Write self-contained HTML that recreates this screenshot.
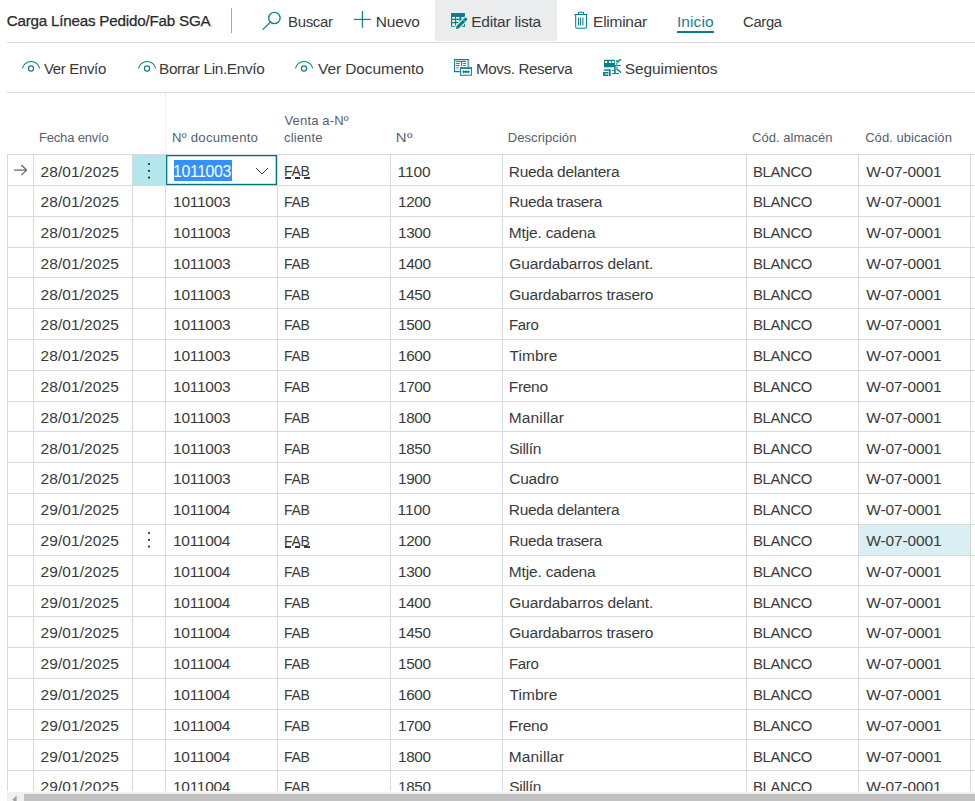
<!DOCTYPE html>
<html><head><meta charset="utf-8"><style>
html,body{margin:0;padding:0;}
body{width:975px;height:801px;overflow:hidden;position:relative;background:#fff;font-family:"Liberation Sans", sans-serif;}
.t{position:absolute;white-space:nowrap;}
.r{position:absolute;}
#clip{position:absolute;left:0;top:0;width:975px;height:791px;overflow:hidden;}
</style></head><body>
<div id="clip">
<div class="r" style="left:435px;top:0px;width:122px;height:41px;background:#ebecee;border-radius:0 0 3px 3px;"></div>
<div class="t" style="left:6.65px;top:5.00px;font-size:15.2px;line-height:31px;color:#2a2a2a;letter-spacing:-0.207px;-webkit-text-stroke:0.25px #2a2a2a;">Carga Líneas Pedido/Fab SGA</div>
<div class="r" style="left:231px;top:8px;width:1px;height:25px;background:#a3aab6;"></div>
<div class="t" style="left:288.35px;top:6.20px;font-size:15.5px;line-height:31px;color:#3a3a3a;letter-spacing:-0.350px;transform:scaleX(0.9644);transform-origin:1.25px 0;">Buscar</div>
<div class="t" style="left:375.65px;top:6.20px;font-size:15.5px;line-height:31px;color:#3a3a3a;letter-spacing:-0.119px;">Nuevo</div>
<div class="t" style="left:471.25px;top:6.20px;font-size:15.5px;line-height:31px;color:#3a3a3a;letter-spacing:-0.220px;">Editar lista</div>
<div class="t" style="left:593.05px;top:6.20px;font-size:15.5px;line-height:31px;color:#3a3a3a;letter-spacing:-0.257px;">Eliminar</div>
<div class="t" style="left:676.92px;top:6.20px;font-size:15.5px;line-height:31px;color:#17808a;letter-spacing:0.110px;">Inicio</div>
<div class="r" style="left:677px;top:31px;width:37px;height:2px;background:#0b7f86;"></div>
<div class="t" style="left:743.05px;top:6.20px;font-size:15.5px;line-height:31px;color:#3a3a3a;letter-spacing:-0.350px;transform:scaleX(0.9551);transform-origin:0.75px 0;">Carga</div>
<div class="r" style="left:7px;top:42px;width:968px;height:1px;background:#d6d9de;"></div>
<div class="t" style="left:44.40px;top:53.30px;font-size:15.5px;line-height:31px;color:#3a3a3a;letter-spacing:-0.350px;transform:scaleX(0.9667);transform-origin:0.00px 0;">Ver Envío</div>
<div class="t" style="left:159.15px;top:53.30px;font-size:15.5px;line-height:31px;color:#3a3a3a;letter-spacing:-0.350px;transform:scaleX(0.9897);transform-origin:1.25px 0;">Borrar Lin.Envío</div>
<div class="t" style="left:318.00px;top:53.30px;font-size:15.5px;line-height:31px;color:#3a3a3a;letter-spacing:-0.087px;">Ver Documento</div>
<div class="t" style="left:475.75px;top:53.30px;font-size:15.5px;line-height:31px;color:#3a3a3a;letter-spacing:-0.350px;transform:scaleX(0.9742);transform-origin:1.25px 0;">Movs. Reserva</div>
<div class="t" style="left:624.85px;top:53.30px;font-size:15.5px;line-height:31px;color:#3a3a3a;letter-spacing:-0.111px;">Seguimientos</div>
<div class="r" style="left:7px;top:92px;width:968px;height:1px;background:#d6d9de;"></div>
<div class="r" style="left:165px;top:93px;width:1px;height:61px;background:#eeeff1;"></div>
<div class="t" style="left:39.00px;top:125.10px;font-size:13px;line-height:26px;color:#56606e;letter-spacing:-0.183px;">Fecha envío</div>
<div class="t" style="left:171.50px;top:125.10px;font-size:13px;line-height:26px;color:#56606e;letter-spacing:0.250px;transform:scaleX(1.0135);transform-origin:1.00px 0;">Nº documento</div>
<div class="t" style="left:284.50px;top:108.40px;font-size:13px;line-height:26px;color:#56606e;letter-spacing:0.167px;">Venta a-Nº</div>
<div class="t" style="left:284.00px;top:125.10px;font-size:13px;line-height:26px;color:#56606e;letter-spacing:0.133px;">cliente</div>
<div class="t" style="left:395.50px;top:125.10px;font-size:13px;line-height:26px;color:#56606e;letter-spacing:0.250px;transform:scaleX(1.1472);transform-origin:1.00px 0;">Nº</div>
<div class="t" style="left:507.80px;top:125.10px;font-size:13px;line-height:26px;color:#56606e;letter-spacing:0.067px;">Descripción</div>
<div class="t" style="left:752.08px;top:125.10px;font-size:13px;line-height:26px;color:#56606e;letter-spacing:0.023px;">Cód. almacén</div>
<div class="t" style="left:865.17px;top:125.10px;font-size:13px;line-height:26px;color:#56606e;letter-spacing:0.054px;">Cód. ubicación</div>
<div class="r" style="left:133px;top:155px;width:32px;height:30px;background:#b3e7eb;"></div>
<div class="r" style="left:859px;top:525px;width:111px;height:30px;background:#d9eff2;"></div>
<div class="r" style="left:7px;top:154px;width:968px;height:1px;background:#d6d9de;"></div>
<div class="r" style="left:7px;top:185px;width:968px;height:1px;background:#d6d9de;"></div>
<div class="r" style="left:7px;top:216px;width:968px;height:1px;background:#d6d9de;"></div>
<div class="r" style="left:7px;top:247px;width:968px;height:1px;background:#d6d9de;"></div>
<div class="r" style="left:7px;top:277px;width:968px;height:1px;background:#d6d9de;"></div>
<div class="r" style="left:7px;top:308px;width:968px;height:1px;background:#d6d9de;"></div>
<div class="r" style="left:7px;top:339px;width:968px;height:1px;background:#d6d9de;"></div>
<div class="r" style="left:7px;top:370px;width:968px;height:1px;background:#d6d9de;"></div>
<div class="r" style="left:7px;top:401px;width:968px;height:1px;background:#d6d9de;"></div>
<div class="r" style="left:7px;top:431px;width:968px;height:1px;background:#d6d9de;"></div>
<div class="r" style="left:7px;top:462px;width:968px;height:1px;background:#d6d9de;"></div>
<div class="r" style="left:7px;top:493px;width:968px;height:1px;background:#d6d9de;"></div>
<div class="r" style="left:7px;top:524px;width:968px;height:1px;background:#d6d9de;"></div>
<div class="r" style="left:7px;top:555px;width:968px;height:1px;background:#d6d9de;"></div>
<div class="r" style="left:7px;top:585px;width:968px;height:1px;background:#d6d9de;"></div>
<div class="r" style="left:7px;top:616px;width:968px;height:1px;background:#d6d9de;"></div>
<div class="r" style="left:7px;top:647px;width:968px;height:1px;background:#d6d9de;"></div>
<div class="r" style="left:7px;top:678px;width:968px;height:1px;background:#d6d9de;"></div>
<div class="r" style="left:7px;top:709px;width:968px;height:1px;background:#d6d9de;"></div>
<div class="r" style="left:7px;top:739px;width:968px;height:1px;background:#d6d9de;"></div>
<div class="r" style="left:7px;top:770px;width:968px;height:1px;background:#d6d9de;"></div>
<div class="r" style="left:7px;top:801px;width:968px;height:1px;background:#d6d9de;"></div>
<div class="r" style="left:7px;top:154px;width:1px;height:637px;background:#d6d9de;"></div>
<div class="r" style="left:33px;top:154px;width:1px;height:637px;background:#d6d9de;"></div>
<div class="r" style="left:132px;top:154px;width:1px;height:637px;background:#d6d9de;"></div>
<div class="r" style="left:165px;top:154px;width:1px;height:637px;background:#d6d9de;"></div>
<div class="r" style="left:277px;top:154px;width:1px;height:637px;background:#d6d9de;"></div>
<div class="r" style="left:390px;top:154px;width:1px;height:637px;background:#d6d9de;"></div>
<div class="r" style="left:502px;top:154px;width:1px;height:637px;background:#d6d9de;"></div>
<div class="r" style="left:746px;top:154px;width:1px;height:637px;background:#d6d9de;"></div>
<div class="r" style="left:858px;top:154px;width:1px;height:637px;background:#d6d9de;"></div>
<div class="r" style="left:970px;top:154px;width:1px;height:637px;background:#d6d9de;"></div>
<div class="t" style="left:40.55px;top:156.00px;font-size:15.5px;line-height:31px;color:#3a3a3a;letter-spacing:0.072px;">28/01/2025</div>
<div class="t" style="left:284.45px;top:154.70px;font-size:15.5px;line-height:31px;color:#3a3a3a;letter-spacing:-0.350px;transform:scaleX(0.9002);transform-origin:1.25px 0;">FAB</div>
<div class="t" style="left:397.57px;top:156.00px;font-size:15.5px;line-height:31px;color:#3a3a3a;letter-spacing:-0.108px;">1100</div>
<div class="t" style="left:508.75px;top:156.00px;font-size:15.5px;line-height:31px;color:#3a3a3a;letter-spacing:-0.270px;">Rueda delantera</div>
<div class="t" style="left:753.35px;top:156.00px;font-size:15.5px;line-height:31px;color:#3a3a3a;letter-spacing:-0.350px;transform:scaleX(0.9567);transform-origin:1.25px 0;">BLANCO</div>
<div class="t" style="left:866.20px;top:156.00px;font-size:15.5px;line-height:31px;color:#3a3a3a;letter-spacing:-0.116px;">W-07-0001</div>
<div class="t" style="left:40.55px;top:186.20px;font-size:15.5px;line-height:31px;color:#3a3a3a;letter-spacing:0.072px;">28/01/2025</div>
<div class="t" style="left:173.07px;top:186.20px;font-size:15.5px;line-height:31px;color:#3a3a3a;letter-spacing:-0.267px;">1011003</div>
<div class="t" style="left:284.45px;top:186.20px;font-size:15.5px;line-height:31px;color:#3a3a3a;letter-spacing:-0.350px;transform:scaleX(0.9002);transform-origin:1.25px 0;">FAB</div>
<div class="t" style="left:397.57px;top:186.20px;font-size:15.5px;line-height:31px;color:#3a3a3a;letter-spacing:-0.350px;transform:scaleX(0.9874);transform-origin:1.12px 0;">1200</div>
<div class="t" style="left:508.75px;top:186.20px;font-size:15.5px;line-height:31px;color:#3a3a3a;letter-spacing:-0.350px;transform:scaleX(0.9925);transform-origin:1.25px 0;">Rueda trasera</div>
<div class="t" style="left:753.35px;top:186.20px;font-size:15.5px;line-height:31px;color:#3a3a3a;letter-spacing:-0.350px;transform:scaleX(0.9567);transform-origin:1.25px 0;">BLANCO</div>
<div class="t" style="left:866.20px;top:186.20px;font-size:15.5px;line-height:31px;color:#3a3a3a;letter-spacing:-0.116px;">W-07-0001</div>
<div class="t" style="left:40.55px;top:217.00px;font-size:15.5px;line-height:31px;color:#3a3a3a;letter-spacing:0.072px;">28/01/2025</div>
<div class="t" style="left:173.07px;top:217.00px;font-size:15.5px;line-height:31px;color:#3a3a3a;letter-spacing:-0.267px;">1011003</div>
<div class="t" style="left:284.45px;top:217.00px;font-size:15.5px;line-height:31px;color:#3a3a3a;letter-spacing:-0.350px;transform:scaleX(0.9002);transform-origin:1.25px 0;">FAB</div>
<div class="t" style="left:397.57px;top:217.00px;font-size:15.5px;line-height:31px;color:#3a3a3a;letter-spacing:-0.350px;transform:scaleX(0.9874);transform-origin:1.12px 0;">1300</div>
<div class="t" style="left:508.75px;top:217.00px;font-size:15.5px;line-height:31px;color:#3a3a3a;letter-spacing:-0.164px;">Mtje. cadena</div>
<div class="t" style="left:753.35px;top:217.00px;font-size:15.5px;line-height:31px;color:#3a3a3a;letter-spacing:-0.350px;transform:scaleX(0.9567);transform-origin:1.25px 0;">BLANCO</div>
<div class="t" style="left:866.20px;top:217.00px;font-size:15.5px;line-height:31px;color:#3a3a3a;letter-spacing:-0.116px;">W-07-0001</div>
<div class="t" style="left:40.55px;top:247.80px;font-size:15.5px;line-height:31px;color:#3a3a3a;letter-spacing:0.072px;">28/01/2025</div>
<div class="t" style="left:173.07px;top:247.80px;font-size:15.5px;line-height:31px;color:#3a3a3a;letter-spacing:-0.267px;">1011003</div>
<div class="t" style="left:284.45px;top:247.80px;font-size:15.5px;line-height:31px;color:#3a3a3a;letter-spacing:-0.350px;transform:scaleX(0.9002);transform-origin:1.25px 0;">FAB</div>
<div class="t" style="left:397.57px;top:247.80px;font-size:15.5px;line-height:31px;color:#3a3a3a;letter-spacing:-0.350px;transform:scaleX(0.9874);transform-origin:1.12px 0;">1400</div>
<div class="t" style="left:509.25px;top:247.80px;font-size:15.5px;line-height:31px;color:#3a3a3a;letter-spacing:-0.129px;">Guardabarros delant.</div>
<div class="t" style="left:753.35px;top:247.80px;font-size:15.5px;line-height:31px;color:#3a3a3a;letter-spacing:-0.350px;transform:scaleX(0.9567);transform-origin:1.25px 0;">BLANCO</div>
<div class="t" style="left:866.20px;top:247.80px;font-size:15.5px;line-height:31px;color:#3a3a3a;letter-spacing:-0.116px;">W-07-0001</div>
<div class="t" style="left:40.55px;top:278.60px;font-size:15.5px;line-height:31px;color:#3a3a3a;letter-spacing:0.072px;">28/01/2025</div>
<div class="t" style="left:173.07px;top:278.60px;font-size:15.5px;line-height:31px;color:#3a3a3a;letter-spacing:-0.267px;">1011003</div>
<div class="t" style="left:284.45px;top:278.60px;font-size:15.5px;line-height:31px;color:#3a3a3a;letter-spacing:-0.350px;transform:scaleX(0.9002);transform-origin:1.25px 0;">FAB</div>
<div class="t" style="left:397.57px;top:278.60px;font-size:15.5px;line-height:31px;color:#3a3a3a;letter-spacing:-0.350px;transform:scaleX(0.9874);transform-origin:1.12px 0;">1450</div>
<div class="t" style="left:509.25px;top:278.60px;font-size:15.5px;line-height:31px;color:#3a3a3a;letter-spacing:-0.214px;">Guardabarros trasero</div>
<div class="t" style="left:753.35px;top:278.60px;font-size:15.5px;line-height:31px;color:#3a3a3a;letter-spacing:-0.350px;transform:scaleX(0.9567);transform-origin:1.25px 0;">BLANCO</div>
<div class="t" style="left:866.20px;top:278.60px;font-size:15.5px;line-height:31px;color:#3a3a3a;letter-spacing:-0.116px;">W-07-0001</div>
<div class="t" style="left:40.55px;top:309.40px;font-size:15.5px;line-height:31px;color:#3a3a3a;letter-spacing:0.072px;">28/01/2025</div>
<div class="t" style="left:173.07px;top:309.40px;font-size:15.5px;line-height:31px;color:#3a3a3a;letter-spacing:-0.267px;">1011003</div>
<div class="t" style="left:284.45px;top:309.40px;font-size:15.5px;line-height:31px;color:#3a3a3a;letter-spacing:-0.350px;transform:scaleX(0.9002);transform-origin:1.25px 0;">FAB</div>
<div class="t" style="left:397.57px;top:309.40px;font-size:15.5px;line-height:31px;color:#3a3a3a;letter-spacing:-0.350px;transform:scaleX(0.9874);transform-origin:1.12px 0;">1500</div>
<div class="t" style="left:508.75px;top:309.40px;font-size:15.5px;line-height:31px;color:#3a3a3a;letter-spacing:-0.350px;transform:scaleX(0.9672);transform-origin:1.25px 0;">Faro</div>
<div class="t" style="left:753.35px;top:309.40px;font-size:15.5px;line-height:31px;color:#3a3a3a;letter-spacing:-0.350px;transform:scaleX(0.9567);transform-origin:1.25px 0;">BLANCO</div>
<div class="t" style="left:866.20px;top:309.40px;font-size:15.5px;line-height:31px;color:#3a3a3a;letter-spacing:-0.116px;">W-07-0001</div>
<div class="t" style="left:40.55px;top:340.20px;font-size:15.5px;line-height:31px;color:#3a3a3a;letter-spacing:0.072px;">28/01/2025</div>
<div class="t" style="left:173.07px;top:340.20px;font-size:15.5px;line-height:31px;color:#3a3a3a;letter-spacing:-0.267px;">1011003</div>
<div class="t" style="left:284.45px;top:340.20px;font-size:15.5px;line-height:31px;color:#3a3a3a;letter-spacing:-0.350px;transform:scaleX(0.9002);transform-origin:1.25px 0;">FAB</div>
<div class="t" style="left:397.57px;top:340.20px;font-size:15.5px;line-height:31px;color:#3a3a3a;letter-spacing:-0.350px;transform:scaleX(0.9874);transform-origin:1.12px 0;">1600</div>
<div class="t" style="left:509.62px;top:340.20px;font-size:15.5px;line-height:31px;color:#3a3a3a;letter-spacing:0.015px;">Timbre</div>
<div class="t" style="left:753.35px;top:340.20px;font-size:15.5px;line-height:31px;color:#3a3a3a;letter-spacing:-0.350px;transform:scaleX(0.9567);transform-origin:1.25px 0;">BLANCO</div>
<div class="t" style="left:866.20px;top:340.20px;font-size:15.5px;line-height:31px;color:#3a3a3a;letter-spacing:-0.116px;">W-07-0001</div>
<div class="t" style="left:40.55px;top:371.00px;font-size:15.5px;line-height:31px;color:#3a3a3a;letter-spacing:0.072px;">28/01/2025</div>
<div class="t" style="left:173.07px;top:371.00px;font-size:15.5px;line-height:31px;color:#3a3a3a;letter-spacing:-0.267px;">1011003</div>
<div class="t" style="left:284.45px;top:371.00px;font-size:15.5px;line-height:31px;color:#3a3a3a;letter-spacing:-0.350px;transform:scaleX(0.9002);transform-origin:1.25px 0;">FAB</div>
<div class="t" style="left:397.57px;top:371.00px;font-size:15.5px;line-height:31px;color:#3a3a3a;letter-spacing:-0.350px;transform:scaleX(0.9874);transform-origin:1.12px 0;">1700</div>
<div class="t" style="left:508.75px;top:371.00px;font-size:15.5px;line-height:31px;color:#3a3a3a;letter-spacing:-0.306px;">Freno</div>
<div class="t" style="left:753.35px;top:371.00px;font-size:15.5px;line-height:31px;color:#3a3a3a;letter-spacing:-0.350px;transform:scaleX(0.9567);transform-origin:1.25px 0;">BLANCO</div>
<div class="t" style="left:866.20px;top:371.00px;font-size:15.5px;line-height:31px;color:#3a3a3a;letter-spacing:-0.116px;">W-07-0001</div>
<div class="t" style="left:40.55px;top:401.80px;font-size:15.5px;line-height:31px;color:#3a3a3a;letter-spacing:0.072px;">28/01/2025</div>
<div class="t" style="left:173.07px;top:401.80px;font-size:15.5px;line-height:31px;color:#3a3a3a;letter-spacing:-0.267px;">1011003</div>
<div class="t" style="left:284.45px;top:401.80px;font-size:15.5px;line-height:31px;color:#3a3a3a;letter-spacing:-0.350px;transform:scaleX(0.9002);transform-origin:1.25px 0;">FAB</div>
<div class="t" style="left:397.57px;top:401.80px;font-size:15.5px;line-height:31px;color:#3a3a3a;letter-spacing:-0.350px;transform:scaleX(0.9874);transform-origin:1.12px 0;">1800</div>
<div class="t" style="left:508.75px;top:401.80px;font-size:15.5px;line-height:31px;color:#3a3a3a;letter-spacing:0.136px;">Manillar</div>
<div class="t" style="left:753.35px;top:401.80px;font-size:15.5px;line-height:31px;color:#3a3a3a;letter-spacing:-0.350px;transform:scaleX(0.9567);transform-origin:1.25px 0;">BLANCO</div>
<div class="t" style="left:866.20px;top:401.80px;font-size:15.5px;line-height:31px;color:#3a3a3a;letter-spacing:-0.116px;">W-07-0001</div>
<div class="t" style="left:40.55px;top:432.60px;font-size:15.5px;line-height:31px;color:#3a3a3a;letter-spacing:0.072px;">28/01/2025</div>
<div class="t" style="left:173.07px;top:432.60px;font-size:15.5px;line-height:31px;color:#3a3a3a;letter-spacing:-0.267px;">1011003</div>
<div class="t" style="left:284.45px;top:432.60px;font-size:15.5px;line-height:31px;color:#3a3a3a;letter-spacing:-0.350px;transform:scaleX(0.9002);transform-origin:1.25px 0;">FAB</div>
<div class="t" style="left:397.57px;top:432.60px;font-size:15.5px;line-height:31px;color:#3a3a3a;letter-spacing:-0.350px;transform:scaleX(0.9874);transform-origin:1.12px 0;">1850</div>
<div class="t" style="left:509.25px;top:432.60px;font-size:15.5px;line-height:31px;color:#3a3a3a;letter-spacing:-0.295px;">Sillín</div>
<div class="t" style="left:753.35px;top:432.60px;font-size:15.5px;line-height:31px;color:#3a3a3a;letter-spacing:-0.350px;transform:scaleX(0.9567);transform-origin:1.25px 0;">BLANCO</div>
<div class="t" style="left:866.20px;top:432.60px;font-size:15.5px;line-height:31px;color:#3a3a3a;letter-spacing:-0.116px;">W-07-0001</div>
<div class="t" style="left:40.55px;top:463.40px;font-size:15.5px;line-height:31px;color:#3a3a3a;letter-spacing:0.072px;">28/01/2025</div>
<div class="t" style="left:173.07px;top:463.40px;font-size:15.5px;line-height:31px;color:#3a3a3a;letter-spacing:-0.267px;">1011003</div>
<div class="t" style="left:284.45px;top:463.40px;font-size:15.5px;line-height:31px;color:#3a3a3a;letter-spacing:-0.350px;transform:scaleX(0.9002);transform-origin:1.25px 0;">FAB</div>
<div class="t" style="left:397.57px;top:463.40px;font-size:15.5px;line-height:31px;color:#3a3a3a;letter-spacing:-0.350px;transform:scaleX(0.9874);transform-origin:1.12px 0;">1900</div>
<div class="t" style="left:509.25px;top:463.40px;font-size:15.5px;line-height:31px;color:#3a3a3a;letter-spacing:-0.220px;">Cuadro</div>
<div class="t" style="left:753.35px;top:463.40px;font-size:15.5px;line-height:31px;color:#3a3a3a;letter-spacing:-0.350px;transform:scaleX(0.9567);transform-origin:1.25px 0;">BLANCO</div>
<div class="t" style="left:866.20px;top:463.40px;font-size:15.5px;line-height:31px;color:#3a3a3a;letter-spacing:-0.116px;">W-07-0001</div>
<div class="t" style="left:40.55px;top:494.20px;font-size:15.5px;line-height:31px;color:#3a3a3a;letter-spacing:0.072px;">29/01/2025</div>
<div class="t" style="left:173.07px;top:494.20px;font-size:15.5px;line-height:31px;color:#3a3a3a;letter-spacing:-0.308px;">1011004</div>
<div class="t" style="left:284.45px;top:494.20px;font-size:15.5px;line-height:31px;color:#3a3a3a;letter-spacing:-0.350px;transform:scaleX(0.9002);transform-origin:1.25px 0;">FAB</div>
<div class="t" style="left:397.57px;top:494.20px;font-size:15.5px;line-height:31px;color:#3a3a3a;letter-spacing:-0.108px;">1100</div>
<div class="t" style="left:508.75px;top:494.20px;font-size:15.5px;line-height:31px;color:#3a3a3a;letter-spacing:-0.270px;">Rueda delantera</div>
<div class="t" style="left:753.35px;top:494.20px;font-size:15.5px;line-height:31px;color:#3a3a3a;letter-spacing:-0.350px;transform:scaleX(0.9567);transform-origin:1.25px 0;">BLANCO</div>
<div class="t" style="left:866.20px;top:494.20px;font-size:15.5px;line-height:31px;color:#3a3a3a;letter-spacing:-0.116px;">W-07-0001</div>
<div class="t" style="left:40.55px;top:525.00px;font-size:15.5px;line-height:31px;color:#3a3a3a;letter-spacing:0.072px;">29/01/2025</div>
<div class="t" style="left:173.07px;top:525.00px;font-size:15.5px;line-height:31px;color:#3a3a3a;letter-spacing:-0.308px;">1011004</div>
<div class="t" style="left:284.45px;top:524.60px;font-size:15.5px;line-height:31px;color:#3a3a3a;letter-spacing:-0.350px;transform:scaleX(0.9002);transform-origin:1.25px 0;">FAB</div>
<div class="t" style="left:397.57px;top:525.00px;font-size:15.5px;line-height:31px;color:#3a3a3a;letter-spacing:-0.350px;transform:scaleX(0.9874);transform-origin:1.12px 0;">1200</div>
<div class="t" style="left:508.75px;top:525.00px;font-size:15.5px;line-height:31px;color:#3a3a3a;letter-spacing:-0.350px;transform:scaleX(0.9925);transform-origin:1.25px 0;">Rueda trasera</div>
<div class="t" style="left:753.35px;top:525.00px;font-size:15.5px;line-height:31px;color:#3a3a3a;letter-spacing:-0.350px;transform:scaleX(0.9567);transform-origin:1.25px 0;">BLANCO</div>
<div class="t" style="left:866.20px;top:525.00px;font-size:15.5px;line-height:31px;color:#3a3a3a;letter-spacing:-0.116px;">W-07-0001</div>
<div class="t" style="left:40.55px;top:555.80px;font-size:15.5px;line-height:31px;color:#3a3a3a;letter-spacing:0.072px;">29/01/2025</div>
<div class="t" style="left:173.07px;top:555.80px;font-size:15.5px;line-height:31px;color:#3a3a3a;letter-spacing:-0.308px;">1011004</div>
<div class="t" style="left:284.45px;top:555.80px;font-size:15.5px;line-height:31px;color:#3a3a3a;letter-spacing:-0.350px;transform:scaleX(0.9002);transform-origin:1.25px 0;">FAB</div>
<div class="t" style="left:397.57px;top:555.80px;font-size:15.5px;line-height:31px;color:#3a3a3a;letter-spacing:-0.350px;transform:scaleX(0.9874);transform-origin:1.12px 0;">1300</div>
<div class="t" style="left:508.75px;top:555.80px;font-size:15.5px;line-height:31px;color:#3a3a3a;letter-spacing:-0.164px;">Mtje. cadena</div>
<div class="t" style="left:753.35px;top:555.80px;font-size:15.5px;line-height:31px;color:#3a3a3a;letter-spacing:-0.350px;transform:scaleX(0.9567);transform-origin:1.25px 0;">BLANCO</div>
<div class="t" style="left:866.20px;top:555.80px;font-size:15.5px;line-height:31px;color:#3a3a3a;letter-spacing:-0.116px;">W-07-0001</div>
<div class="t" style="left:40.55px;top:586.60px;font-size:15.5px;line-height:31px;color:#3a3a3a;letter-spacing:0.072px;">29/01/2025</div>
<div class="t" style="left:173.07px;top:586.60px;font-size:15.5px;line-height:31px;color:#3a3a3a;letter-spacing:-0.308px;">1011004</div>
<div class="t" style="left:284.45px;top:586.60px;font-size:15.5px;line-height:31px;color:#3a3a3a;letter-spacing:-0.350px;transform:scaleX(0.9002);transform-origin:1.25px 0;">FAB</div>
<div class="t" style="left:397.57px;top:586.60px;font-size:15.5px;line-height:31px;color:#3a3a3a;letter-spacing:-0.350px;transform:scaleX(0.9874);transform-origin:1.12px 0;">1400</div>
<div class="t" style="left:509.25px;top:586.60px;font-size:15.5px;line-height:31px;color:#3a3a3a;letter-spacing:-0.129px;">Guardabarros delant.</div>
<div class="t" style="left:753.35px;top:586.60px;font-size:15.5px;line-height:31px;color:#3a3a3a;letter-spacing:-0.350px;transform:scaleX(0.9567);transform-origin:1.25px 0;">BLANCO</div>
<div class="t" style="left:866.20px;top:586.60px;font-size:15.5px;line-height:31px;color:#3a3a3a;letter-spacing:-0.116px;">W-07-0001</div>
<div class="t" style="left:40.55px;top:617.40px;font-size:15.5px;line-height:31px;color:#3a3a3a;letter-spacing:0.072px;">29/01/2025</div>
<div class="t" style="left:173.07px;top:617.40px;font-size:15.5px;line-height:31px;color:#3a3a3a;letter-spacing:-0.308px;">1011004</div>
<div class="t" style="left:284.45px;top:617.40px;font-size:15.5px;line-height:31px;color:#3a3a3a;letter-spacing:-0.350px;transform:scaleX(0.9002);transform-origin:1.25px 0;">FAB</div>
<div class="t" style="left:397.57px;top:617.40px;font-size:15.5px;line-height:31px;color:#3a3a3a;letter-spacing:-0.350px;transform:scaleX(0.9874);transform-origin:1.12px 0;">1450</div>
<div class="t" style="left:509.25px;top:617.40px;font-size:15.5px;line-height:31px;color:#3a3a3a;letter-spacing:-0.214px;">Guardabarros trasero</div>
<div class="t" style="left:753.35px;top:617.40px;font-size:15.5px;line-height:31px;color:#3a3a3a;letter-spacing:-0.350px;transform:scaleX(0.9567);transform-origin:1.25px 0;">BLANCO</div>
<div class="t" style="left:866.20px;top:617.40px;font-size:15.5px;line-height:31px;color:#3a3a3a;letter-spacing:-0.116px;">W-07-0001</div>
<div class="t" style="left:40.55px;top:648.20px;font-size:15.5px;line-height:31px;color:#3a3a3a;letter-spacing:0.072px;">29/01/2025</div>
<div class="t" style="left:173.07px;top:648.20px;font-size:15.5px;line-height:31px;color:#3a3a3a;letter-spacing:-0.308px;">1011004</div>
<div class="t" style="left:284.45px;top:648.20px;font-size:15.5px;line-height:31px;color:#3a3a3a;letter-spacing:-0.350px;transform:scaleX(0.9002);transform-origin:1.25px 0;">FAB</div>
<div class="t" style="left:397.57px;top:648.20px;font-size:15.5px;line-height:31px;color:#3a3a3a;letter-spacing:-0.350px;transform:scaleX(0.9874);transform-origin:1.12px 0;">1500</div>
<div class="t" style="left:508.75px;top:648.20px;font-size:15.5px;line-height:31px;color:#3a3a3a;letter-spacing:-0.350px;transform:scaleX(0.9672);transform-origin:1.25px 0;">Faro</div>
<div class="t" style="left:753.35px;top:648.20px;font-size:15.5px;line-height:31px;color:#3a3a3a;letter-spacing:-0.350px;transform:scaleX(0.9567);transform-origin:1.25px 0;">BLANCO</div>
<div class="t" style="left:866.20px;top:648.20px;font-size:15.5px;line-height:31px;color:#3a3a3a;letter-spacing:-0.116px;">W-07-0001</div>
<div class="t" style="left:40.55px;top:679.00px;font-size:15.5px;line-height:31px;color:#3a3a3a;letter-spacing:0.072px;">29/01/2025</div>
<div class="t" style="left:173.07px;top:679.00px;font-size:15.5px;line-height:31px;color:#3a3a3a;letter-spacing:-0.308px;">1011004</div>
<div class="t" style="left:284.45px;top:679.00px;font-size:15.5px;line-height:31px;color:#3a3a3a;letter-spacing:-0.350px;transform:scaleX(0.9002);transform-origin:1.25px 0;">FAB</div>
<div class="t" style="left:397.57px;top:679.00px;font-size:15.5px;line-height:31px;color:#3a3a3a;letter-spacing:-0.350px;transform:scaleX(0.9874);transform-origin:1.12px 0;">1600</div>
<div class="t" style="left:509.62px;top:679.00px;font-size:15.5px;line-height:31px;color:#3a3a3a;letter-spacing:0.015px;">Timbre</div>
<div class="t" style="left:753.35px;top:679.00px;font-size:15.5px;line-height:31px;color:#3a3a3a;letter-spacing:-0.350px;transform:scaleX(0.9567);transform-origin:1.25px 0;">BLANCO</div>
<div class="t" style="left:866.20px;top:679.00px;font-size:15.5px;line-height:31px;color:#3a3a3a;letter-spacing:-0.116px;">W-07-0001</div>
<div class="t" style="left:40.55px;top:709.80px;font-size:15.5px;line-height:31px;color:#3a3a3a;letter-spacing:0.072px;">29/01/2025</div>
<div class="t" style="left:173.07px;top:709.80px;font-size:15.5px;line-height:31px;color:#3a3a3a;letter-spacing:-0.308px;">1011004</div>
<div class="t" style="left:284.45px;top:709.80px;font-size:15.5px;line-height:31px;color:#3a3a3a;letter-spacing:-0.350px;transform:scaleX(0.9002);transform-origin:1.25px 0;">FAB</div>
<div class="t" style="left:397.57px;top:709.80px;font-size:15.5px;line-height:31px;color:#3a3a3a;letter-spacing:-0.350px;transform:scaleX(0.9874);transform-origin:1.12px 0;">1700</div>
<div class="t" style="left:508.75px;top:709.80px;font-size:15.5px;line-height:31px;color:#3a3a3a;letter-spacing:-0.306px;">Freno</div>
<div class="t" style="left:753.35px;top:709.80px;font-size:15.5px;line-height:31px;color:#3a3a3a;letter-spacing:-0.350px;transform:scaleX(0.9567);transform-origin:1.25px 0;">BLANCO</div>
<div class="t" style="left:866.20px;top:709.80px;font-size:15.5px;line-height:31px;color:#3a3a3a;letter-spacing:-0.116px;">W-07-0001</div>
<div class="t" style="left:40.55px;top:740.60px;font-size:15.5px;line-height:31px;color:#3a3a3a;letter-spacing:0.072px;">29/01/2025</div>
<div class="t" style="left:173.07px;top:740.60px;font-size:15.5px;line-height:31px;color:#3a3a3a;letter-spacing:-0.308px;">1011004</div>
<div class="t" style="left:284.45px;top:740.60px;font-size:15.5px;line-height:31px;color:#3a3a3a;letter-spacing:-0.350px;transform:scaleX(0.9002);transform-origin:1.25px 0;">FAB</div>
<div class="t" style="left:397.57px;top:740.60px;font-size:15.5px;line-height:31px;color:#3a3a3a;letter-spacing:-0.350px;transform:scaleX(0.9874);transform-origin:1.12px 0;">1800</div>
<div class="t" style="left:508.75px;top:740.60px;font-size:15.5px;line-height:31px;color:#3a3a3a;letter-spacing:0.136px;">Manillar</div>
<div class="t" style="left:753.35px;top:740.60px;font-size:15.5px;line-height:31px;color:#3a3a3a;letter-spacing:-0.350px;transform:scaleX(0.9567);transform-origin:1.25px 0;">BLANCO</div>
<div class="t" style="left:866.20px;top:740.60px;font-size:15.5px;line-height:31px;color:#3a3a3a;letter-spacing:-0.116px;">W-07-0001</div>
<div class="t" style="left:40.55px;top:771.40px;font-size:15.5px;line-height:31px;color:#3a3a3a;letter-spacing:0.072px;">29/01/2025</div>
<div class="t" style="left:173.07px;top:771.40px;font-size:15.5px;line-height:31px;color:#3a3a3a;letter-spacing:-0.308px;">1011004</div>
<div class="t" style="left:284.45px;top:771.40px;font-size:15.5px;line-height:31px;color:#3a3a3a;letter-spacing:-0.350px;transform:scaleX(0.9002);transform-origin:1.25px 0;">FAB</div>
<div class="t" style="left:397.57px;top:771.40px;font-size:15.5px;line-height:31px;color:#3a3a3a;letter-spacing:-0.350px;transform:scaleX(0.9874);transform-origin:1.12px 0;">1850</div>
<div class="t" style="left:509.25px;top:771.40px;font-size:15.5px;line-height:31px;color:#3a3a3a;letter-spacing:-0.295px;">Sillín</div>
<div class="t" style="left:753.35px;top:771.40px;font-size:15.5px;line-height:31px;color:#3a3a3a;letter-spacing:-0.350px;transform:scaleX(0.9567);transform-origin:1.25px 0;">BLANCO</div>
<div class="t" style="left:866.20px;top:771.40px;font-size:15.5px;line-height:31px;color:#3a3a3a;letter-spacing:-0.116px;">W-07-0001</div>
<svg style="position:absolute;left:255px;top:5px;overflow:visible" width="30" height="30" viewBox="255 5 30 30"><circle cx="274.4" cy="18" r="5.7" fill="none" stroke="#0a7f86" stroke-width="1.3"/><line x1="270.3" y1="22.1" x2="263" y2="29.4" stroke="#0a7f86" stroke-width="1.3" stroke-linecap="round"/></svg>
<svg style="position:absolute;left:350px;top:8px;overflow:visible" width="25" height="25" viewBox="350 8 25 25"><line x1="353.8" y1="19.4" x2="370.9" y2="19.4" stroke="#0a7f86" stroke-width="1.15"/><line x1="362.4" y1="11.1" x2="362.4" y2="27.7" stroke="#0a7f86" stroke-width="1.15"/></svg>
<svg style="position:absolute;left:448px;top:10px;overflow:visible" width="22" height="22" viewBox="448 10 22 22"><path fill="#0a7f86" fill-rule="evenodd" d="M451,13H464.9V26.8H451Z M452.1,17V18.8H455V17Z M456.1,17V18.8H459.5V17Z M461.3,17V18.8H463.8V17Z M452.1,20.1V21.9H455V20.1Z M456.1,20.1V21.9H459.5V20.1Z M461.3,20.1V21.9H463.8V20.1Z M452.1,23.3V25.9H455V23.3Z M456.1,23.3V25.9H459.5V23.3Z M461.3,23.3V25.9H463.8V23.3Z"/><path d="M457.4,27.4 L465.7,19.1" stroke="#ebecee" stroke-width="5.4" stroke-linecap="round"/><path d="M458.2,26.6 L465.7,19.1" stroke="#0a7f86" stroke-width="3" stroke-linecap="round"/><path d="M463.5,20.2 L465.0,21.7" stroke="#ebecee" stroke-width="0.8"/><path fill="#0a7f86" d="M455.9,28.9 L456.6,25.9 L459,28.2 Z"/><path fill="#0a7f86" d="M462.9,26.8 L464.9,24.4 V26.8 Z"/></svg>
<svg style="position:absolute;left:570px;top:10px;overflow:visible" width="22" height="22" viewBox="570 10 22 22"><g fill="none" stroke="#0a7f86" stroke-width="1.05"><line x1="574.3" y1="14.5" x2="587.5" y2="14.5"/><path d="M578.5,14.5 V13 Q578.5,12.3 579.2,12.3 H582.9 Q583.6,12.3 583.6,13 V14.5"/><path d="M575.7,14.5 V27 Q575.7,28.3 577,28.3 H585.2 Q586.5,28.3 586.5,27 V14.5"/><line x1="578.5" y1="17.6" x2="578.5" y2="25.6"/><line x1="580.6" y1="17.6" x2="580.6" y2="25.6"/><line x1="582.9" y1="17.6" x2="582.9" y2="25.6"/></g></svg>
<svg style="position:absolute;left:18.9px;top:55px;overflow:visible" width="24" height="20" viewBox="18.9 55 24 20"><g fill="none" stroke="#0a7f86" stroke-width="1.15"><path d="M22.40,68.4 A8.8,8.8 0 0 1 39.60,68.4"/><circle cx="30.9" cy="68.5" r="2.6"/></g></svg>
<svg style="position:absolute;left:134.6px;top:55px;overflow:visible" width="24" height="20" viewBox="134.6 55 24 20"><g fill="none" stroke="#0a7f86" stroke-width="1.15"><path d="M138.10,68.4 A8.8,8.8 0 0 1 155.30,68.4"/><circle cx="146.6" cy="68.5" r="2.6"/></g></svg>
<svg style="position:absolute;left:292.3px;top:55px;overflow:visible" width="24" height="20" viewBox="292.3 55 24 20"><g fill="none" stroke="#0a7f86" stroke-width="1.15"><path d="M295.80,68.4 A8.8,8.8 0 0 1 313.00,68.4"/><circle cx="304.3" cy="68.5" r="2.6"/></g></svg>
<svg style="position:absolute;left:450px;top:55px;overflow:visible" width="25" height="25" viewBox="450 55 25 25"><g fill="none" stroke="#0a7f86" stroke-width="1.05"><path d="M459.9,71.6 H454.6 V59.6 H468.2 V67"/><path d="M460.6,68 H471.4 V75.3 H460.6 Z"/></g><rect x="460.1" y="67.3" width="11.8" height="1.5" fill="#0a7f86"/><g stroke="#0a7f86" stroke-width="0.95"><line x1="456.1" y1="61.45" x2="466.1" y2="61.45"/><line x1="456.1" y1="63.45" x2="459.7" y2="63.45"/><line x1="462.9" y1="63.45" x2="466.1" y2="63.45"/><line x1="456.1" y1="65.45" x2="459.7" y2="65.45"/><line x1="462.9" y1="65.45" x2="466.1" y2="65.45"/><line x1="461.5" y1="61.4" x2="461.5" y2="66"/><line x1="456.1" y1="67.4" x2="459.2" y2="67.4" stroke-opacity="0.7"/><line x1="456.1" y1="69.1" x2="459.2" y2="69.1" stroke-opacity="0.45"/></g><path fill="#0a7f86" d="M462.1,71.8 L464,69.9 V71 H468 V69.9 L469.9,71.8 L468,73.7 V72.6 H464 V73.7 Z"/><circle cx="466" cy="71.8" r="1.2" fill="#0a7f86"/></svg>
<svg style="position:absolute;left:598px;top:55px;overflow:visible" width="28" height="25" viewBox="598 55 28 25"><path fill="#0a7f86" fill-rule="evenodd" d="M604,59.8 H614.9 V67.1 H604 Z M604.9,60.9 V62.9 H607.2 V60.9 Z M608.9,60.9 V62.9 H611.1 V60.9 Z M612.1,60.9 V62.9 H614.1 V60.9 Z"/><rect x="604" y="67.1" width="8" height="1.1" fill="#0a7f86" opacity="0.35"/><path fill="#0a7f86" d="M604.9,69.3 H610.7 V75.9 H608.9 V70.8 H603.1 Z M603.1,72.1 H608.3 V73.5 H604.9 V74.6 H608.3 V75.9 H603.1 Z"/><g fill="#0a7f86"><rect x="614.1" y="65.7" width="1.6" height="8.1"/><rect x="612" y="73" width="7.1" height="0.95"/><rect x="612" y="70" width="2.1" height="0.9"/><rect x="614.1" y="64.9" width="6.8" height="1.3" opacity="0.85"/></g><g stroke="#0a7f86" stroke-width="1.4" stroke-linecap="round" fill="none"><path d="M616.9,62 L620.6,59.6"/><path d="M616.9,69 L620.6,72.3"/><path d="M616.6,60.5 L618.3,62.2" stroke-width="1.1"/><path d="M617,67.3 V68" stroke-width="1.1"/><path d="M616.8,63.5 V64.3" stroke-width="1.1"/></g></svg>
<svg style="position:absolute;left:10px;top:160px;overflow:visible" width="20" height="20" viewBox="10 160 20 20"><g fill="none" stroke="#5f5f5f" stroke-width="1.2"><line x1="14" y1="170.1" x2="26.5" y2="170.1"/><path d="M21.4,165 L26.5,170.1 L21.4,175.2"/></g></svg>
<svg style="position:absolute;left:146.0px;top:161.4px;overflow:visible" width="6" height="20" viewBox="146.0 161.4 6 20"><g fill="#262626"><circle cx="149.0" cy="164.4" r="1.1"/><circle cx="149.0" cy="171.20" r="1.1"/><circle cx="149.0" cy="178.00" r="1.1"/></g></svg>
<svg style="position:absolute;left:146.0px;top:530.4px;overflow:visible" width="6" height="20" viewBox="146.0 530.4 6 20"><g fill="#262626"><circle cx="149.0" cy="533.4" r="1.1"/><circle cx="149.0" cy="540.20" r="1.1"/><circle cx="149.0" cy="547.00" r="1.1"/></g></svg>
<svg style="position:absolute;left:160px;top:150px;overflow:visible" width="125" height="40" viewBox="160 150 125 40"><rect x="166.65" y="155.65" width="109.7" height="28.8" fill="#fff" stroke="#00767d" stroke-width="1.3"/></svg>
<div class="r" style="left:173.9px;top:160px;width:58.2px;height:20.9px;background:#3390ff;"></div>
<div class="t" style="left:173.47px;top:156.10px;font-size:16px;line-height:32px;color:#fff;letter-spacing:-0.350px;transform:scaleX(0.9865);transform-origin:1.12px 0;">1011003</div>
<svg style="position:absolute;left:250px;top:160px;overflow:visible" width="24" height="20" viewBox="250 160 24 20"><path d="M256,168 L262,174 L268,168" fill="none" stroke="#444" stroke-width="1"/></svg>
<div class="r" style="left:285.2px;top:177.2px;width:5.8px;height:1.7px;background:#3a3a3a;"></div>
<div class="r" style="left:294.7px;top:177.2px;width:5.8px;height:1.7px;background:#3a3a3a;"></div>
<div class="r" style="left:304.2px;top:177.2px;width:5.8px;height:1.7px;background:#3a3a3a;"></div>
<div class="r" style="left:285.2px;top:546.1px;width:5.8px;height:1.7px;background:#3a3a3a;"></div>
<div class="r" style="left:294.7px;top:546.1px;width:5.8px;height:1.7px;background:#3a3a3a;"></div>
<div class="r" style="left:304.2px;top:546.1px;width:5.8px;height:1.7px;background:#3a3a3a;"></div>
</div>
<div class="r" style="left:7px;top:792px;width:968px;height:9px;background:#f1f1f1;"></div>
<div class="r" style="left:24px;top:794px;width:951px;height:7px;background:#c1c1c1;"></div>
<svg style="position:absolute;left:8px;top:792px;overflow:visible" width="12" height="9" viewBox="8 792 12 9"><path d="M12.4,799.6 L16.6,795.6 V803.5 Z" fill="#a0a0a0"/></svg>
<div>
</div>
</body></html>
